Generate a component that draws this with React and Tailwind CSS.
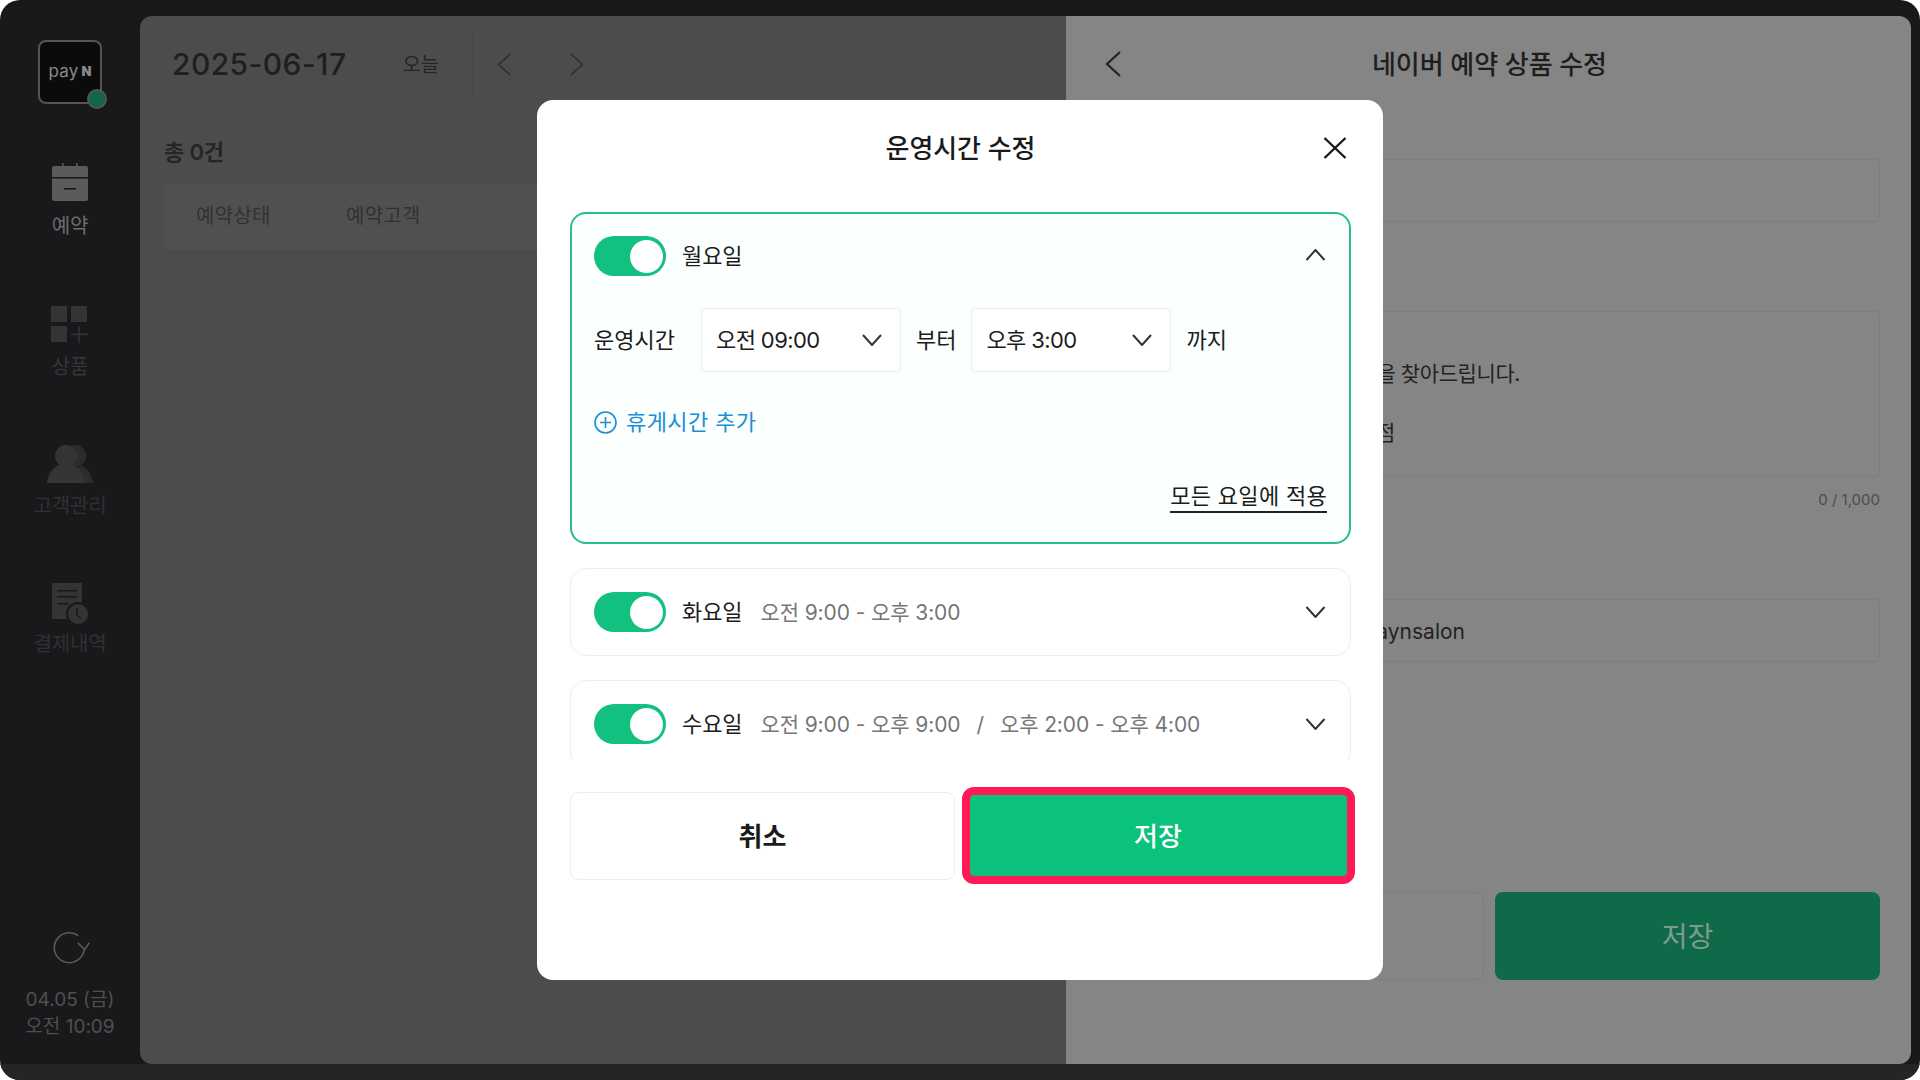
const Chevron = ({ dir = "down", className = "", sw = 2 }) => {
  const pts = { down: "1,1 10,11 19,1", up: "1,11 10,1 19,11" };
  return (
    <svg viewBox="0 0 20 12" className={className} fill="none" stroke="currentColor" strokeWidth={sw}>
      <polyline points={pts[dir]} />
    </svg>
  );
};

const Side = ({ dir = "left", className = "", sw = 2.2 }) => (
  <svg viewBox="0 0 16 26" className={className} fill="none" stroke="currentColor" strokeWidth={sw}>
    <polyline points={dir === "left" ? "15,1 2,13 15,25" : "1,1 14,13 1,25"} />
  </svg>
);

const Toggle = () => (
  <div className="flex h-[40px] w-[72px] shrink-0 items-center justify-end rounded-full bg-[#12c07f] pr-[3px]">
    <div className="h-[33px] w-[33px] rounded-full bg-white" />
  </div>
);

const Select = ({ label }) => (
  <div className="flex h-[64px] w-[200px] items-center justify-between rounded-[4px] border border-[#eceeef] bg-white pl-[14px] pr-[18px] text-[22px] tracking-[-0.6px] text-[#1c1c1c]">
    <span>{label}</span>
    <Chevron className="h-[12px] w-[20px] text-[#333]" />
  </div>
);

const NavItem = ({ icon, label, className, gap, tone }) => (
  <div className={`flex flex-col items-center ${className}`}>
    <div className="flex h-[38px] items-start justify-center">{icon}</div>
    <div className={`h-[24px] text-[20px] leading-[24px] tracking-[-0.2px] ${gap} ${tone}`}>{label}</div>
  </div>
);

const CalIcon = () => (
  <svg width="38" height="38" viewBox="0 0 38 38" fill="#5b5b5b">
    <rect x="11" y="0" width="1.6" height="5" />
    <rect x="25" y="0" width="1.6" height="5" />
    <path d="M1 5a2 2 0 0 1 2-2h32a2 2 0 0 1 2 2v9H1z" />
    <path d="M1 15.5h36V36a2 2 0 0 1-2 2H3a2 2 0 0 1-2-2z" />
    <rect x="13" y="25" width="12" height="1.6" fill="#19191b" />
  </svg>
);

const GridIcon = () => (
  <svg width="38" height="38" viewBox="0 0 38 38" fill="#323436">
    <rect x="0" y="0" width="16" height="16" />
    <rect x="20" y="0" width="16" height="16" />
    <rect x="0" y="20" width="16" height="16" />
    <rect x="27.2" y="20" width="1.6" height="17" />
    <rect x="20" y="27.5" width="17" height="1.6" />
  </svg>
);

const PeopleIcon = () => (
  <svg width="46" height="38" viewBox="0 0 46 38" fill="#323436">
    <circle cx="28" cy="11" r="11" fill="#2a2c2e" />
    <path d="M26 38c0-9 3-16 9-17 7 3 10 9 11 17z" fill="#2a2c2e" />
    <circle cx="19" cy="11" r="11" />
    <path d="M0 38c1-9 5-15 12-18h14c7 3 11 9 12 18z" />
  </svg>
);

const ReceiptIcon = () => (
  <svg width="42" height="44" viewBox="0 0 42 44" fill="#323436">
    <rect x="3" y="0" width="30" height="36" />
    <rect x="8" y="7" width="20" height="1.5" fill="#19191b" />
    <rect x="8" y="13" width="20" height="1.5" fill="#19191b" />
    <rect x="8" y="20" width="12" height="1.5" fill="#19191b" />
    <circle cx="29" cy="31" r="12" fill="#19191b" />
    <circle cx="29" cy="31" r="10" />
    <path d="M28 25v7l4 4" fill="none" stroke="#19191b" strokeWidth="1.5" />
  </svg>
);

const DayCard = ({ day, times }) => (
  <div className="flex h-[88px] shrink-0 items-center rounded-[16px] border border-[#eceeef] bg-white pl-[23px] pr-[24px]">
    <Toggle />
    <span className="ml-[16px] text-[22px] tracking-[-0.1px] text-[#1c1c1c]">{day}</span>
    <div className="ml-[18px] flex translate-y-[1px] items-center text-[21px] tracking-[-0.1px] text-[#767676]">
      <span>{times[0]}</span>
      {times[1] && <span className="mx-[16px]">/</span>}
      {times[1] && <span>{times[1]}</span>}
    </div>
    <Chevron className="ml-auto h-[12px] w-[21px] text-[#333]" />
  </div>
);

export default function App() {
  return (
    <div className="relative h-[1080px] w-[1920px] overflow-hidden bg-white font-['Inter','Noto_Sans_CJK_KR',sans-serif]">
      <div className="flex h-full w-full flex-col overflow-hidden rounded-[20px] bg-[#19191b]">
        <div className="flex min-h-0 flex-1 pr-[9px] pt-[16px]">
          {/* sidebar */}
          <aside className="flex w-[140px] shrink-0 flex-col items-center pb-[24px] pt-[24px]">
            <div className="relative flex h-[64px] w-[64px] items-center justify-center rounded-[8px] border-2 border-[#555] bg-[#0b0b0c] pb-[2px] text-[#8a8a8a]">
              <span className="text-[17px] leading-none tracking-[0.2px]">pay</span>
              <span className="ml-[3px] text-[13px] font-black leading-none">N</span>
              <span className="absolute right-[-7px] top-[47px] h-[20px] w-[20px] rounded-full border-2 border-[#555] bg-[#0f6649]" />
            </div>
            <NavItem className="mt-[59px]" gap="mt-[13px]" icon={<CalIcon />} label="예약" tone="text-[#6c6c6c]" />
            <NavItem className="mt-[68px]" gap="mt-[11px]" icon={<GridIcon />} label="상품" tone="text-[#343638]" />
            <NavItem className="mt-[66px]" gap="mt-[11px]" icon={<PeopleIcon />} label="고객관리" tone="text-[#2f3133]" />
            <NavItem className="mt-[65px]" gap="mt-[11px]" icon={<ReceiptIcon />} label="결제내역" tone="text-[#2f3133]" />
            <div className="mt-auto flex flex-col items-center text-[#4f4f4f]">
              <svg width="42" height="36" viewBox="0 0 42 36" fill="none" stroke="#5a5a5a" strokeWidth="1.6">
                <path d="M35.3 18.7A15 15 0 0 1 20.3 33.7A15 15 0 0 1 5.3 18.7A15 15 0 0 1 20.3 3.7A15 15 0 0 1 29.3 6.7" />
                <path d="M28.7 13.7L35.6 20.6L40.3 13.7" />
              </svg>
              <div className="mt-[21px] text-[19px] leading-[27px]">04.05 (금)</div>
              <div className="text-[19px] leading-[27px]">오전 10:09</div>
            </div>
          </aside>

          {/* main */}
          <main className="flex w-[926px] shrink-0 flex-col rounded-l-[12px] bg-[#4c4c4c] text-[#252525]">
            <header className="flex h-[96px] shrink-0 items-center pl-[32px]">
              <span className="text-[30px] font-medium tracking-[0.4px] text-[#1f1f1f]">2025-06-17</span>
              <span className="ml-[56px] translate-y-[1px] text-[20px] tracking-[-0.1px]">오늘</span>
              <div className="ml-[26px] h-[64px] w-[8px] border-x border-[#484848]" />
              <Side className="ml-[24px] h-[25px] w-[14px] text-[#2e2e2e]" sw={1.8} />
              <Side dir="right" className="ml-[59px] h-[25px] w-[14px] text-[#2e2e2e]" sw={1.8} />
            </header>
            <div className="ml-[24px] mt-[26px] text-[22px] font-semibold leading-[28px] tracking-[-0.2px]">총 0건</div>
            <div className="ml-[24px] mt-[18px] flex h-[66px] items-center bg-[#505050] pb-[2px] pl-[32px] text-[20px] tracking-[0.3px] text-[#323232]">
              <span className="w-[150px]">예약상태</span>
              <span>예약고객</span>
            </div>
          </main>

          {/* right */}
          <section className="flex min-w-0 flex-1 flex-col rounded-r-[12px] bg-[#858585] px-[31px] text-[#1e1e1e]">
            <header className="grid h-[96px] shrink-0 grid-cols-[1fr_auto_1fr] items-center">
              <Side className="ml-[8px] h-[26px] w-[16px] text-[#222]" />
              <span className="ml-[2px] text-[26px] font-medium tracking-[-0.1px]">네이버 예약 상품 수정</span>
            </header>
            <div className="mt-[47px] h-[63px] shrink-0 rounded-[4px] border border-[#7d7d7d]" />
            <div className="mt-[89px] flex h-[166px] shrink-0 flex-col items-end rounded-[4px] border border-[#7d7d7d] pr-[359px] text-[21px] tracking-[-0.4px] text-[#222]">
              <div className="mt-[47px] whitespace-nowrap leading-[30px]">고객님의 아름다움을 찾아드립니다.</div>
              <div className="mr-[125px] mt-[29px] whitespace-nowrap leading-[30px]">페인살롱 강남점</div>
            </div>
            <div className="mt-[12px] text-right text-[15px] leading-[22px] text-[#4c4c4c]">0 / 1,000</div>
            <div className="mt-[88px] flex h-[63px] shrink-0 items-center justify-end rounded-[4px] border border-[#7d7d7d] pr-[414px] pt-[2px] text-[21px] text-[#222]">
              <span className="whitespace-nowrap">naver.me/paynsalon</span>
            </div>
            <div className="mt-[230px] flex h-[88px] shrink-0 gap-[11px]">
              <div className="flex-1 rounded-[8px] border border-[#7d7d7d]" />
              <div className="flex flex-1 items-center justify-center rounded-[8px] bg-[#0f6a4a] pt-[2px] text-[28px] text-[#7f9a8e]">저장</div>
            </div>
          </section>
        </div>
        <div className="h-[16px] shrink-0 bg-[#232527]" />
      </div>

      {/* modal */}
      <div className="absolute left-[537px] top-[100px] flex h-[880px] w-[846px] flex-col rounded-[16px] bg-white pl-[33px] pr-[32px]">
        <div className="mt-[16px] grid h-[64px] shrink-0 grid-cols-[1fr_auto_1fr] items-center">
          <span />
          <span className="text-[26px] font-medium tracking-[-0.1px] text-[#1a1a1a]">운영시간 수정</span>
          <svg width="24" height="22" viewBox="0 0 24 22" className="justify-self-end mr-[4px]" fill="none" stroke="#1a1a1a" strokeWidth="2.4">
            <path d="M1.5 1l21 20M22.5 1l-21 20" />
          </svg>
        </div>
        <div className="mt-[32px] flex h-[548px] shrink-0 flex-col gap-[24px] overflow-hidden">
          <div className="flex h-[332px] shrink-0 flex-col rounded-[16px] border-2 border-[#27bd8d] bg-[#fbfffe] px-[22px] pt-[22px]">
            <div className="flex items-center">
              <Toggle />
              <span className="ml-[16px] text-[22px] tracking-[-0.1px] text-[#1c1c1c]">월요일</span>
              <Chevron dir="up" className="ml-auto mr-[1px] h-[12px] w-[21px] -translate-y-[1px] text-[#333]" />
            </div>
            <div className="mt-[32px] flex items-center text-[22px] text-[#1c1c1c]">
              <span className="w-[107px]">운영시간</span>
              <Select label="오전 09:00" />
              <span className="mx-[15px]">부터</span>
              <Select label="오후 3:00" />
              <span className="ml-[15px]">까지</span>
            </div>
            <div className="mt-[34px] flex h-[32px] items-center text-[22px] tracking-[0.4px] text-[#1a8fd8]">
              <svg width="23" height="23" viewBox="0 0 23 23" fill="none" stroke="#1a8fd8" strokeWidth="1.6">
                <circle cx="11.5" cy="11.5" r="10.5" />
                <path d="M11.5 6v11M6 11.5h11" />
              </svg>
              <span className="ml-[9px]">휴게시간 추가</span>
            </div>
            <div className="mt-[44px] self-end border-b-2 border-[#222] text-[22px] leading-[29px] tracking-[0.3px] text-[#1c1c1c]">모든 요일에 적용</div>
          </div>
          <DayCard day="화요일" times={["오전 9:00 - 오후 3:00"]} />
          <DayCard day="수요일" times={["오전 9:00 - 오후 9:00", "오후 2:00 - 오후 4:00"]} />
        </div>
        <div className="mt-[32px] flex h-[88px] shrink-0 gap-[10px]">
          <div className="flex w-[385px] shrink-0 items-center justify-center rounded-[8px] border border-[#eceeef] bg-white text-[26px] font-semibold text-[#1a1a1a]">취소</div>
          <div className="relative flex flex-1 items-center justify-center rounded-[4px] bg-[#0bc27c] text-[26px] font-medium text-white">
            저장
            <div className="absolute -bottom-[4px] -left-[3px] -right-[4px] -top-[5px] rounded-[12px] border-[8px] border-[#ff1a55]" />
          </div>
        </div>
      </div>
    </div>
  );
}
